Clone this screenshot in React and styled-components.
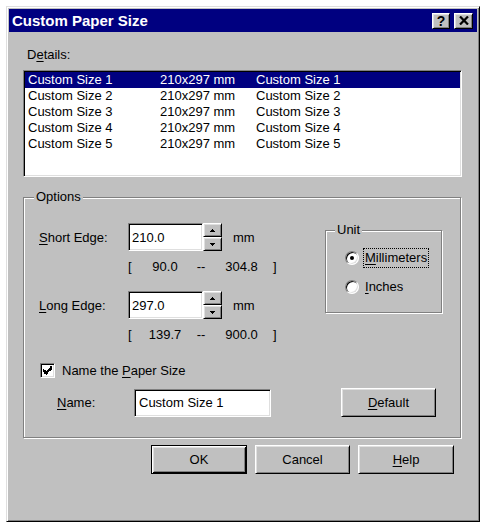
import React from 'react'
import styled, { createGlobalStyle, css } from 'styled-components'

const GlobalStyle = createGlobalStyle`
    body {
        margin: 0;
        background: #fff;
        font-family: "Liberation Sans", Arial, sans-serif;
        font-size: 13px;
        color: #000;
    }
`

const raised = css`
    border: 1px solid;
    border-color: #fff #000 #000 #fff;
    box-shadow: inset 1px 1px #dfdfdf, inset -1px -1px #808080;
`
const sunken = css`
    border: 1px solid;
    border-color: #808080 #fff #fff #808080;
    box-shadow: inset 1px 1px #000, inset -1px -1px #dfdfdf;
`
const etched = css`
    border: 1px solid #808080;
    box-shadow: inset 1px 1px #fff, 1px 1px #fff;
`

const Page = styled.div`
    padding: 6px 0 0 6px;
`
const Window = styled.div`
    width: 474px;
    height: 516px;
    box-sizing: border-box;
    background: #c0c0c0;
    border: 1px solid;
    border-color: #dfdfdf #000 #000 #dfdfdf;
    box-shadow: inset 1px 1px #fff, inset -1px -1px #808080;
    padding: 2px;
    display: flex;
    flex-direction: column;
`
const TitleBar = styled.div`
    height: 23px;
    flex-shrink: 0;
    background: #000080;
    color: #fff;
    display: flex;
    align-items: center;
    padding: 0 4px 0 3px;
    font-weight: bold;
    font-size: 15px;
`
const TitleText = styled.div`
    flex: 1;
`
const TitleButtons = styled.div`
    display: flex;
    gap: 4px;
`
const TitleButton = styled.div`
    ${raised};
    box-sizing: border-box;
    width: ${p => p.$w || 18}px;
    height: 16px;
    background: #c0c0c0;
    color: #000;
    display: flex;
    align-items: center;
    justify-content: center;
    font-size: 14px;
    font-weight: bold;
    line-height: 1;
`
const Body = styled.div`
    display: flex;
    flex-direction: column;
    padding: 15px 15px 0 14px;
`
const Key = styled.span`
    text-decoration: underline;
    text-underline-offset: 2px;
`
const Caption = styled.div`
    height: 16px;
    line-height: 16px;
    padding-left: 4px;
`
const List = styled.div`
    ${sunken};
    box-sizing: border-box;
    height: 107px;
    margin-top: 7px;
    background: #fff;
    padding: 1px;
`
const ListRow = styled.div`
    display: grid;
    grid-template-columns: 132px 96px 1fr;
    height: 16px;
    line-height: 16px;
    padding-left: 3px;
    background: ${p => (p.$selected ? '#000080' : 'transparent')};
    color: ${p => (p.$selected ? '#fff' : '#000')};
`
const Group = styled.div`
    ${etched};
    position: relative;
    box-sizing: border-box;
`
const GroupLabel = styled.div`
    position: absolute;
    top: -9px;
    left: ${p => p.$left || 10}px;
    padding: 0 2px;
    line-height: 16px;
    background: #c0c0c0;
`
const Options = styled(Group)`
    height: 241px;
    margin-top: 20px;
    margin-right: 1px;
    padding: 25px 18px 0 15px;
    display: flex;
    flex-direction: column;
`
const TopSection = styled.div`
    display: flex;
    justify-content: space-between;
    align-items: flex-start;
`
const EdgeColumn = styled.div`
    display: flex;
    flex-direction: column;
`
const EdgeRow = styled.div`
    display: flex;
    align-items: center;
    height: 28px;
    margin-top: ${p => p.$gap || 0}px;
`
const FieldLabel = styled.div`
    width: ${p => p.$w}px;
`
const TextBox = styled.div`
    ${sunken};
    box-sizing: border-box;
    width: ${p => p.$w}px;
    height: 28px;
    background: #fff;
    padding-left: ${p => p.$pad || 3}px;
    display: flex;
    align-items: center;
`
const Spinner = styled.div`
    display: flex;
    flex-direction: column;
    width: 19px;
    height: 28px;
`
const SpinButton = styled.div`
    ${raised};
    box-sizing: border-box;
    height: 14px;
    background: #c0c0c0;
    display: flex;
    align-items: center;
    justify-content: center;
`
const UnitText = styled.div`
    margin-left: 11px;
`
const RangeRow = styled.div`
    display: flex;
    height: 16px;
    line-height: 16px;
    margin-top: 8px;
    margin-left: 89px;
`
const RangeCell = styled.div`
    width: ${p => p.$w}px;
    text-align: ${p => p.$align || 'center'};
`
const UnitBox = styled(Group)`
    width: 117px;
    height: 83px;
    margin-top: 7px;
    padding: 17px 0 0 19px;
    display: flex;
    flex-direction: column;
    gap: 9px;
`
const RadioRow = styled.div`
    display: flex;
    align-items: center;
    height: 20px;
`
const RadioCircle = styled.div`
    ${sunken};
    box-sizing: border-box;
    width: 14px;
    height: 14px;
    border-radius: 50%;
    background: #fff;
    display: flex;
    align-items: center;
    justify-content: center;
`
const RadioDot = styled.div`
    width: 4px;
    height: 4px;
    border-radius: 50%;
    background: #000;
`
const RadioLabel = styled.div`
    margin-left: 5px;
    padding: 1px 1px;
    line-height: 16px;
    outline: ${p => (p.$focused ? '1px dotted #000' : 'none')};
`
const CheckRow = styled.div`
    display: flex;
    align-items: center;
    height: 16px;
    margin-top: 19px;
    padding-left: 1px;
`
const CheckBox = styled.div`
    ${sunken};
    box-sizing: border-box;
    width: 15px;
    height: 15px;
    background: #fff;
    display: flex;
    align-items: center;
    justify-content: center;
`
const CheckLabel = styled.div`
    margin-left: 7px;
`
const NameRow = styled.div`
    display: flex;
    align-items: center;
    height: 29px;
    margin-top: 10px;
    padding-left: 18px;
`
const Button = styled.div`
    ${raised};
    box-sizing: border-box;
    width: ${p => p.$w || 95}px;
    height: 29px;
    margin-left: ${p => p.$ml || 0}px;
    background: #c0c0c0;
    display: flex;
    align-items: center;
    justify-content: center;
    ${p => p.$default && css`
        border: 1px solid #000;
        box-shadow: inset 1px 1px #fff, inset -1px -1px #000,
            inset 2px 2px #dfdfdf, inset -2px -2px #808080;
    `}
`
const ButtonRow = styled.div`
    display: flex;
    justify-content: flex-end;
    gap: 8px;
    margin-top: 7px;
    padding-right: 8px;
`

const Arrow = ({ down }) => (
    <svg width="5" height="3" viewBox="0 0 5 3" shapeRendering="crispEdges">
        <path d={down ? 'M0 0h5v1h-1v1h-1v1h-1v-1h-1v-1h-1z' : 'M2 0h1v1h1v1h1v1h-5v-1h1v-1h1z'} fill="#000" />
    </svg>
)

const CloseGlyph = () => (
    <svg width="10" height="9" viewBox="0 0 10 9">
        <path d="M1 0.5 L9 8.5 M9 0.5 L1 8.5" stroke="#000" strokeWidth="2.2" />
    </svg>
)

const CheckMark = () => (
    <svg width="9" height="9" viewBox="0 0 7 7" shapeRendering="crispEdges">
        <path
            d="M6 0h1v3h-1v1h-1v1h-1v1h-1v1h-1v-1h-1v-1h-1v-3h1v1h1v1h1v-1h1v-1h1z"
            fill="#000"
        />
    </svg>
)

const rows = [1, 2, 3, 4, 5]

const Range = ({ min, max }) => (
    <RangeRow>
        <RangeCell $w={10} $align="left">[</RangeCell>
        <RangeCell $w={54}>{min}</RangeCell>
        <RangeCell $w={18}>--</RangeCell>
        <RangeCell $w={63}>{max}</RangeCell>
        <RangeCell $w={10} $align="left">]</RangeCell>
    </RangeRow>
)

const Edge = ({ hotkey, rest, value, gap }) => (
    <EdgeRow $gap={gap}>
        <FieldLabel $w={89}><Key>{hotkey}</Key>{rest}</FieldLabel>
        <TextBox $w={75}>{value}</TextBox>
        <Spinner>
            <SpinButton><Arrow /></SpinButton>
            <SpinButton><Arrow down /></SpinButton>
        </Spinner>
        <UnitText>mm</UnitText>
    </EdgeRow>
)

const App = () => {
    return (
        <Page>
            <GlobalStyle />
            <Window>
                <TitleBar>
                    <TitleText>Custom Paper Size</TitleText>
                    <TitleButtons>
                        <TitleButton>?</TitleButton>
                        <TitleButton $w={19}><CloseGlyph /></TitleButton>
                    </TitleButtons>
                </TitleBar>
                <Body>
                    <Caption>D<Key>e</Key>tails:</Caption>
                    <List>
                        {rows.map(n => (
                            <ListRow key={n} $selected={n === 1}>
                                <span>Custom Size {n}</span>
                                <span>210x297 mm</span>
                                <span>Custom Size {n}</span>
                            </ListRow>
                        ))}
                    </List>
                    <Options>
                        <GroupLabel>Options</GroupLabel>
                        <TopSection>
                            <EdgeColumn>
                                <Edge hotkey="S" rest="hort Edge:" value="210.0" />
                                <Range min="90.0" max="304.8" />
                                <Edge hotkey="L" rest="ong Edge:" value="297.0" gap={16} />
                                <Range min="139.7" max="900.0" />
                            </EdgeColumn>
                            <UnitBox>
                                <GroupLabel $left={9}>Unit</GroupLabel>
                                <RadioRow>
                                    <RadioCircle><RadioDot /></RadioCircle>
                                    <RadioLabel $focused><Key>M</Key>illimeters</RadioLabel>
                                </RadioRow>
                                <RadioRow>
                                    <RadioCircle />
                                    <RadioLabel><Key>I</Key>nches</RadioLabel>
                                </RadioRow>
                            </UnitBox>
                        </TopSection>
                        <CheckRow>
                            <CheckBox><CheckMark /></CheckBox>
                            <CheckLabel>Name the <Key>P</Key>aper Size</CheckLabel>
                        </CheckRow>
                        <NameRow>
                            <FieldLabel $w={77}><Key>N</Key>ame:</FieldLabel>
                            <TextBox $w={137} $pad={4}>Custom Size 1</TextBox>
                            <Button $ml={70}><Key>D</Key>efault</Button>
                        </NameRow>
                    </Options>
                    <ButtonRow>
                        <Button $default $w={96}>OK</Button>
                        <Button>Cancel</Button>
                        <Button $w={96}><Key>H</Key>elp</Button>
                    </ButtonRow>
                </Body>
            </Window>
        </Page>
    )
}

export default App
